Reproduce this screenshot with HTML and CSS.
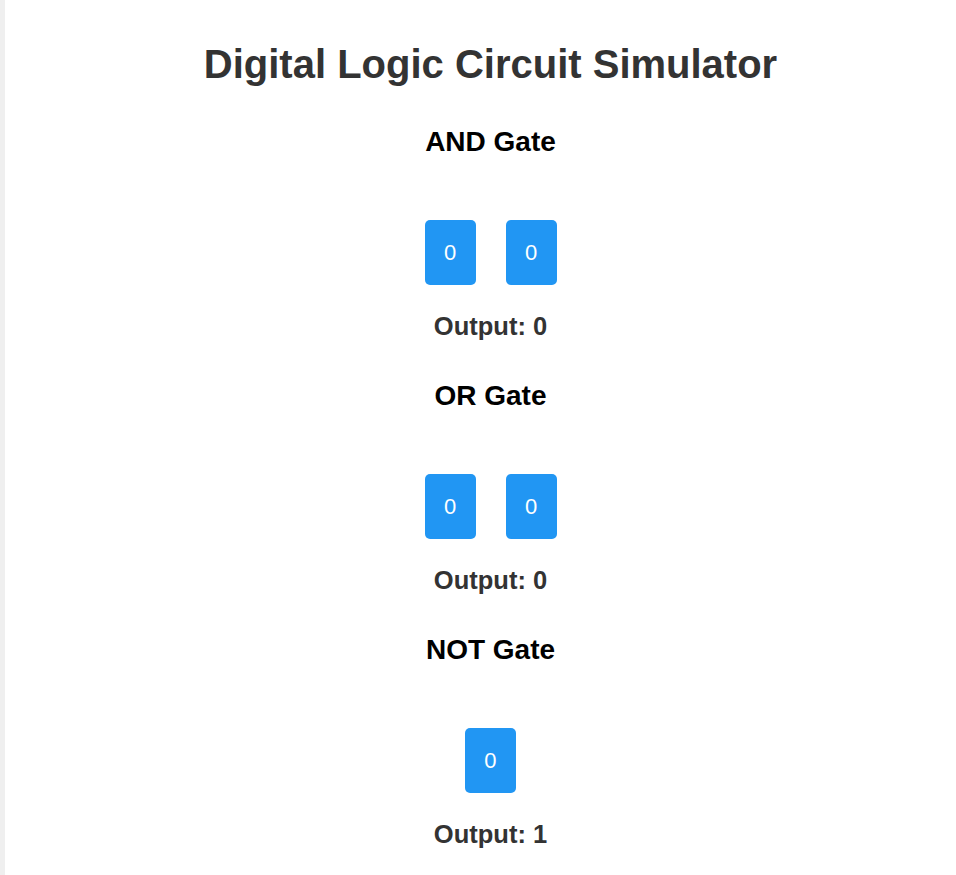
FILE: index.html
```html
<!DOCTYPE html>
<html lang="en">
<head>
<meta charset="utf-8">
<title>Digital Logic Circuit Simulator</title>
<link rel="stylesheet" href="styles.css">
</head>
<body>
<div class="container">
  <h1 class="title">Digital Logic Circuit Simulator</h1>

  <section class="gate">
    <h2 class="gate-name">AND Gate</h2>
    <div class="inputs">
      <button class="bit">0</button>
      <button class="bit">0</button>
    </div>
    <div class="output">Output: 0</div>
  </section>

  <section class="gate">
    <h2 class="gate-name">OR Gate</h2>
    <div class="inputs">
      <button class="bit">0</button>
      <button class="bit">0</button>
    </div>
    <div class="output">Output: 0</div>
  </section>

  <section class="gate">
    <h2 class="gate-name">NOT Gate</h2>
    <div class="inputs">
      <button class="bit">0</button>
    </div>
    <div class="output">Output: 1</div>
  </section>
</div>
</body>
</html>
```

FILE: styles.css
```css
html, body {
  margin: 0;
  padding: 0;
}
body {
  background: #efefef;
  font-family: "Liberation Sans", Arial, sans-serif;
  overflow: hidden;
}
.container {
  margin-left: 5px;
  background: #ffffff;
  padding: 42px 0 40px 20px;
  min-height: 900px;
  display: flex;
  flex-direction: column;
  align-items: center;
}
.title {
  margin: 0;
  font-size: 40px;
  line-height: 44px;
  font-weight: bold;
  color: #333333;
}
.gate {
  display: flex;
  flex-direction: column;
  align-items: center;
  margin-top: 41px;
}
.gate + .gate {
  margin-top: 40px;
}
.gate-name {
  margin: 0;
  font-size: 28px;
  line-height: 30px;
  font-weight: bold;
  color: #000000;
}
.inputs {
  display: flex;
  gap: 30px;
  margin-top: 63px;
}
.bit {
  width: 51px;
  height: 65px;
  border: none;
  border-radius: 5px;
  background: #2196f3;
  color: #ffffff;
  font-family: "Liberation Sans", Arial, sans-serif;
  font-size: 22px;
  padding: 0;
}
.output {
  margin-top: 26px;
  font-size: 25.5px;
  line-height: 30px;
  font-weight: bold;
  color: #333333;
}
```
